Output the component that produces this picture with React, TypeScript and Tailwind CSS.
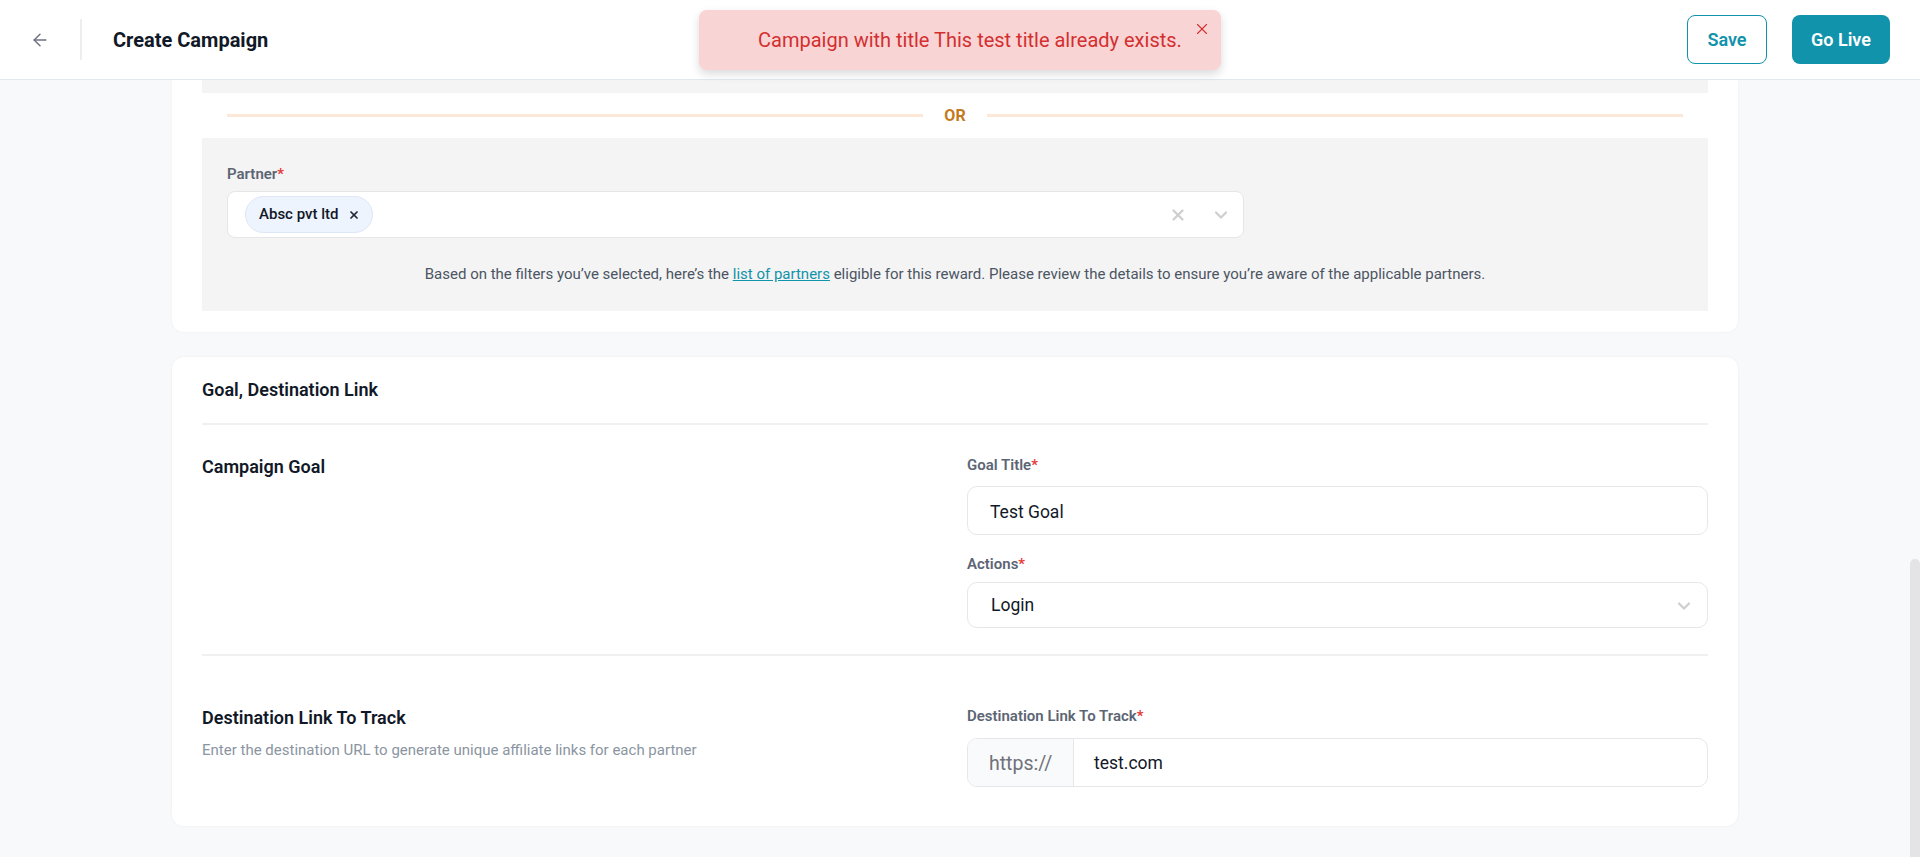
import { ArrowLeft, ChevronDown, X } from "lucide-react";

function Label({ text }: { text: string }) {
  return (
    <label className="block text-[15px] leading-5 font-semibold text-[#5c6573]">
      {text}
      <span className="text-[#e53935]">*</span>
    </label>
  );
}

function Header() {
  return (
    <header className="h-[80px] shrink-0 border-b border-[#e2e8f0] bg-white flex items-center pr-[30px]">
      <div className="w-[80px] flex justify-center">
        <ArrowLeft size={20} strokeWidth={1.75} className="text-[#6b7280]" />
      </div>
      <div className="h-[41px] w-[2px] bg-[#eeeeee]" />
      <h1 className="ml-[31px] text-[20px] font-bold text-[#111827]">Create Campaign</h1>
      <div className="ml-auto flex items-center gap-[25px]">
        <button className="h-[49px] w-[80px] rounded-lg border border-[#1193ab] text-[18px] font-semibold text-[#1193ab]">
          Save
        </button>
        <button className="h-[49px] w-[98px] rounded-lg bg-[#1193ab] text-[18px] font-semibold text-white">
          Go Live
        </button>
      </div>
    </header>
  );
}

function Toast() {
  return (
    <div className="absolute left-[699px] top-[10px] h-[60px] w-[522px] rounded-lg bg-[#f9d4d5] shadow-[0_4px_10px_rgba(0,0,0,0.15)] flex items-center pl-[59px]">
      <span className="text-[20px] text-[#d32f2f]">Campaign with title This test title already exists.</span>
      <X size={18} strokeWidth={1.5} className="absolute right-[10px] top-[10px] text-[#d32f2f]" />
    </div>
  );
}

function PartnerCard() {
  return (
    <div className="mx-[172px] rounded-b-xl bg-white px-[30px] pb-[21px] shadow-[0_0_3px_rgba(0,0,0,0.05)]">
      <div className="h-[13px] bg-[#f4f4f4]" />
      <div className="h-[45px] flex items-center px-[25px]">
        <div className="flex-1 h-[3px] bg-[#fde8d8]" />
        <span className="mx-[21px] text-[16px] font-bold text-[#c47a1c]">OR</span>
        <div className="flex-1 h-[3px] bg-[#fde8d8]" />
      </div>
      <div className="bg-[#f4f4f4] px-[25px] pt-[26px] pb-[27px]">
        <Label text="Partner" />
        <div className="mt-[7px] h-[47px] w-[1017px] rounded-lg border border-[#e6e6e6] bg-white flex items-center pl-[17px] pr-[12px]">
          <div className="h-[37px] rounded-full border border-[#dde7f6] bg-[#eef4fd] flex items-center pl-[13px] pr-[12px] gap-[10px]">
            <span className="text-[15px] font-medium text-[#111827]">Absc pvt ltd</span>
            <X size={12} strokeWidth={3.5} className="text-[#1f2937]" />
          </div>
          <div className="ml-auto flex items-center gap-[24px]">
            <X size={18} strokeWidth={3} className="text-[#cfcfcf]" />
            <ChevronDown size={20} strokeWidth={2.75} className="text-[#cfcfcf]" />
          </div>
        </div>
        <p className="mt-[26px] text-center text-[15px] leading-5 text-[#4b5563]">
          Based on the filters you’ve selected, here’s the{" "}
          <a className="text-[#1193ab] underline">list of partners</a> eligible for this reward. Please review the
          details to ensure you’re aware of the applicable partners.
        </p>
      </div>
    </div>
  );
}

function GoalCard() {
  return (
    <div className="mx-[172px] mt-[25px] rounded-xl bg-white px-[30px] pb-[39px] shadow-[0_0_3px_rgba(0,0,0,0.06)]">
      <div className="py-[19px]">
        <h2 className="text-[18px] leading-7 font-semibold text-[#111827]">Goal, Destination Link</h2>
      </div>
      <div className="h-[2px] bg-[#f0f0f0]" />

      <div className="grid grid-cols-2 gap-x-6 pt-[30px] pb-[26px]">
        <h3 className="text-[18px] leading-6 font-semibold text-[#111827]">Campaign Goal</h3>
        <div>
          <Label text="Goal Title" />
          <div className="mt-[11px] h-[49px] rounded-[10px] border border-[#e5e7eb] flex items-center pl-[22px] pt-[3px] text-[17.5px] text-[#111827]">
            Test Goal
          </div>
          <div className="mt-[19px]">
            <Label text="Actions" />
          </div>
          <div className="mt-[8px] h-[46px] rounded-[10px] border border-[#e5e7eb] flex items-center pl-[23px] pr-[13px] pt-[1px] text-[17.5px] text-[#111827]">
            Login
            <ChevronDown size={20} strokeWidth={2.75} className="ml-auto text-[#cfcfcf]" />
          </div>
        </div>
      </div>
      <div className="h-[2px] bg-[#f0f0f0]" />

      <div className="grid grid-cols-2 gap-x-6 pt-[50px]">
        <div>
          <h3 className="text-[18px] leading-6 font-semibold text-[#111827]">Destination Link To Track</h3>
          <p className="mt-[10px] text-[15px] leading-5 text-[#8b95a1]">
            Enter the destination URL to generate unique affiliate links for each partner
          </p>
        </div>
        <div>
          <Label text="Destination Link To Track" />
          <div className="mt-[12px] h-[49px] rounded-[10px] border border-[#e5e7eb] flex overflow-hidden">
            <div className="w-[106px] shrink-0 bg-[#f8fafc] border-r border-[#e5e7eb] flex items-center pl-[21px] pt-[2px] text-[19.5px] text-[#71717a]">
              https://
            </div>
            <div className="flex items-center pl-[20px] pt-[2px] text-[17.5px] text-[#111827]">test.com</div>
          </div>
        </div>
      </div>
    </div>
  );
}

export default function App() {
  return (
    <div
      className="relative h-[857px] flex flex-col overflow-hidden bg-[#f8f9fb]"
      style={{ fontFamily: "Roboto, 'Noto Sans', sans-serif" }}
    >
      <Header />
      <div className="flex-1 flex min-h-0">
        <main className="flex-1 overflow-hidden">
          <PartnerCard />
          <GoalCard />
        </main>
        <div className="w-[10px] shrink-0 pt-[479px] flex flex-col">
          <div className="flex-1 rounded-t-full bg-[#e4e4e7]" />
        </div>
      </div>
      <Toast />
    </div>
  );
}
